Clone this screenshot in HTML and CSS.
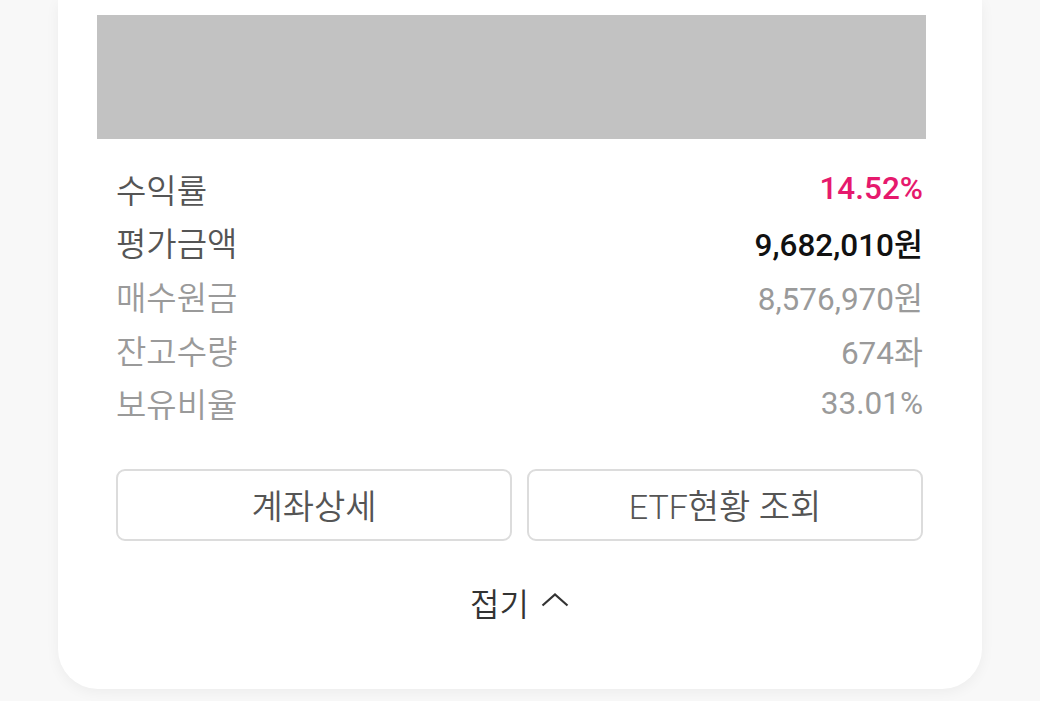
FILE: index.html
```html
<!DOCTYPE html>
<html lang="ko">
<head>
<meta charset="utf-8">
<link rel="stylesheet" href="styles.css">
</head>
<body>
<div class="card">
  <div class="chart"></div>
  <div class="rows">
    <div class="row"><span class="label dark">수익률</span><span class="value pink">14.52%</span></div>
    <div class="row"><span class="label dark">평가금액</span><span class="value strong">9,682,010원</span></div>
    <div class="row"><span class="label">매수원금</span><span class="value">8,576,970원</span></div>
    <div class="row"><span class="label">잔고수량</span><span class="value">674좌</span></div>
    <div class="row"><span class="label">보유비율</span><span class="value">33.01%</span></div>
  </div>
  <div class="buttons">
    <button class="btn">계좌상세</button>
    <button class="btn">ETF현황 조회</button>
  </div>
  <div class="fold">
    <span>접기</span>
    <svg class="chev" width="28" height="14" viewBox="0 0 28 14"><path d="M1.5 12.5 L14 1.5 L26.5 12.5" fill="none" stroke="#333" stroke-width="2.2"/></svg>
  </div>
</div>
</body>
</html>
```
FILE: styles.css
```css
html, body {
  margin: 0;
  padding: 0;
}
body {
  background: #f8f8f8;
  font-family: Roboto, "Noto Sans CJK KR", sans-serif;
  width: 1040px;
  height: 701px;
  overflow: hidden;
}
.card {
  margin-left: 58px;
  width: 924px;
  box-sizing: border-box;
  background: #fff;
  border-radius: 0 0 40px 40px;
  box-shadow: 0 3px 14px rgba(0, 0, 0, 0.05);
  padding: 15px 59px 60px 58px;
}
.chart {
  margin-left: -19px;
  width: 829px;
  height: 124px;
  background: #c2c2c2;
}
.rows {
  margin-top: 23px;
}
.row {
  display: flex;
  justify-content: space-between;
  align-items: center;
  height: 53.6px;
  font-size: 31.5px;
  color: #9a9a9a;
}
.label {
  font-family: "Noto Sans CJK KR", sans-serif;
  font-size: 33px;
  font-weight: 350;
}
.label.dark {
  color: #555;
}
.value.pink {
  color: #e6196d;
  font-weight: 500;
}
.value.strong {
  color: #111;
  font-weight: 500;
}
.buttons {
  margin-top: 39px;
  display: flex;
  gap: 15px;
}
.btn {
  flex: 1;
  height: 72px;
  background: #fff;
  border: 2px solid #dcdcdc;
  border-radius: 9px;
  font-family: Roboto, "Noto Sans CJK KR", sans-serif;
  font-size: 34px;
  font-weight: 350;
  color: #555;
  padding: 0;
}
.fold {
  margin-top: 34px;
  height: 54px;
  display: flex;
  justify-content: center;
  align-items: center;
  gap: 12px;
  font-family: "Noto Sans CJK KR", sans-serif;
  font-size: 32px;
  font-weight: 350;
  color: #333;
}
.chev {
  margin-top: -4px;
}
```
